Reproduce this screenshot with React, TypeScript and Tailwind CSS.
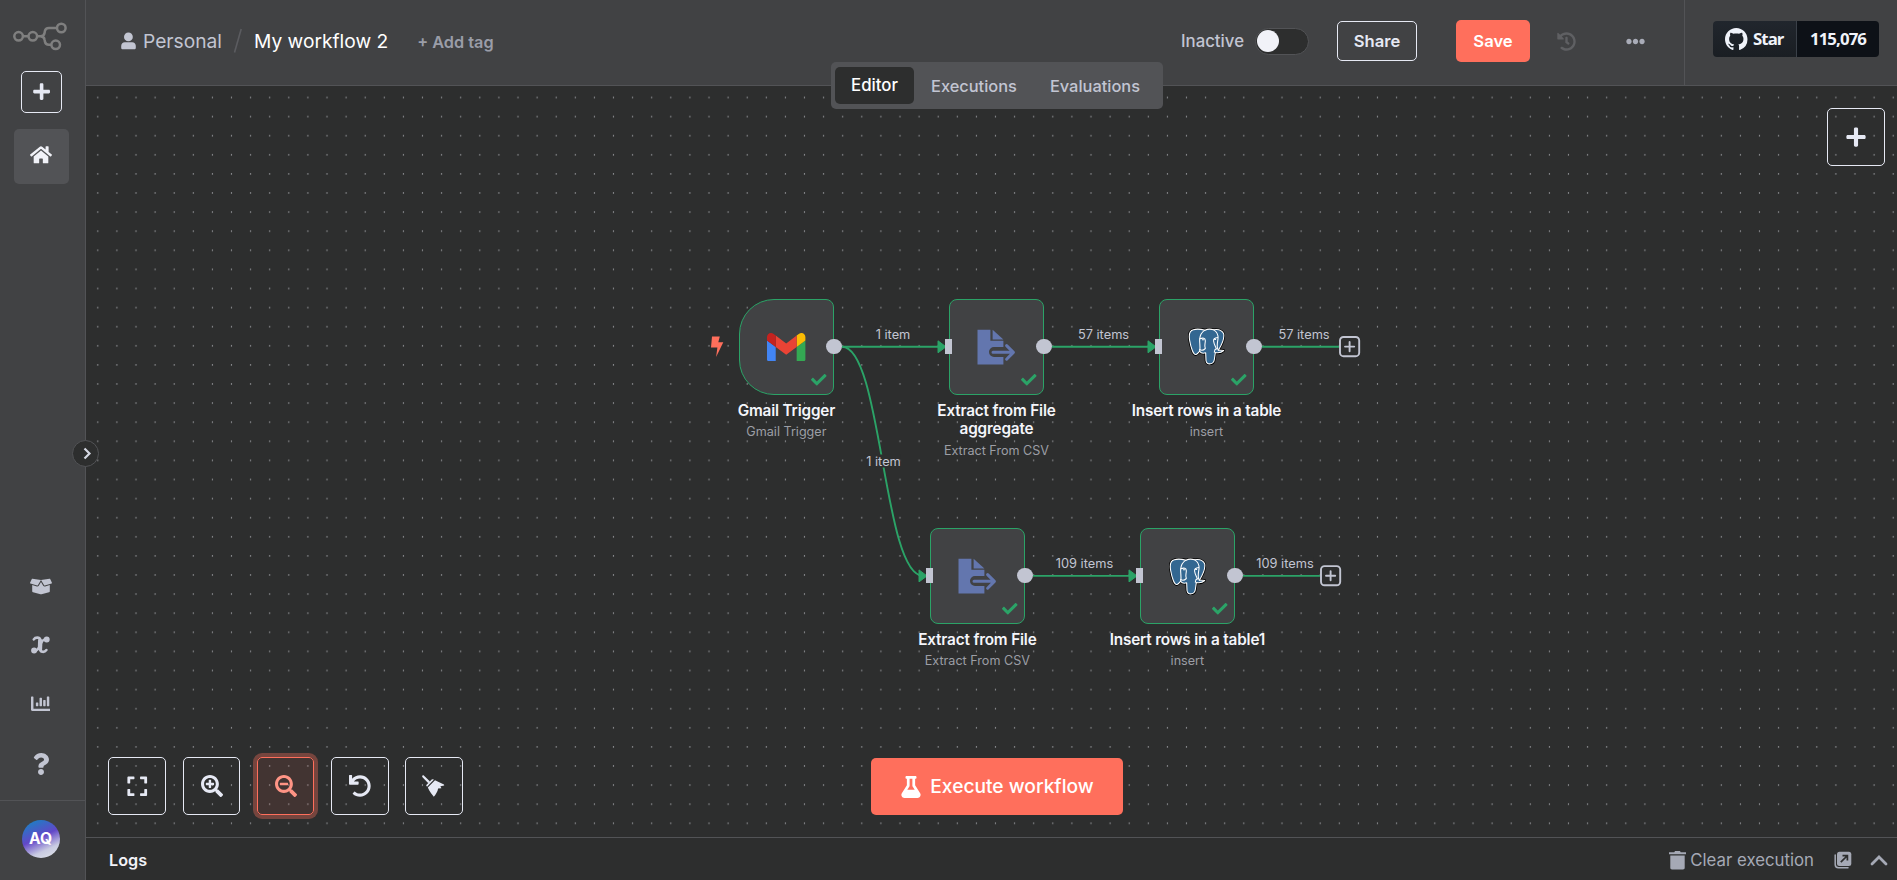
import React from "react";
import {
  FaBoxOpen,
  FaChartBar,
  FaCheck,
  FaEllipsisH,
  FaExpand,
  FaFlask,
  FaHistory,
  FaHome,
  FaPlus,
  FaQuestion,
  FaSearchMinus,
  FaSearchPlus,
  FaUndo,
} from "react-icons/fa";

const GRID = 19.1;
const NODE = 95.6;

type Kind = "gmail" | "extract" | "postgres";

interface FlowNode {
  id: string;
  kind: Kind;
  x: number;
  y: number;
  title: string;
  subtitle: string;
}

const nodes: FlowNode[] = [
  { id: "gmail", kind: "gmail", x: 652.6, y: 213.2, title: "Gmail Trigger", subtitle: "Gmail Trigger" },
  { id: "extract-agg", kind: "extract", x: 862.7, y: 213.2, title: "Extract from File aggregate", subtitle: "Extract From CSV" },
  { id: "insert", kind: "postgres", x: 1072.7, y: 213.2, title: "Insert rows in a table", subtitle: "insert" },
  { id: "extract", kind: "extract", x: 843.6, y: 442.3, title: "Extract from File", subtitle: "Extract From CSV" },
  { id: "insert1", kind: "postgres", x: 1053.6, y: 442.3, title: "Insert rows in a table1", subtitle: "insert" },
];

const labels = [
  { text: "1 item", x: 807, y: 248 },
  { text: "1 item", x: 797.5, y: 375 },
  { text: "57 items", x: 1017.5, y: 248 },
  { text: "57 items", x: 1218, y: 248 },
  { text: "109 items", x: 998.5, y: 477 },
  { text: "109 items", x: 1199, y: 477 },
];

function Logo() {
  return (
    <svg width="56" height="32" viewBox="0 0 56 32" fill="none" stroke="#7f7f7f" strokeWidth="2.5">
      <circle cx="6.6" cy="16.3" r="4.3" />
      <circle cx="20.8" cy="16.3" r="4.3" />
      <circle cx="49.3" cy="8" r="4.3" />
      <circle cx="43.7" cy="24.8" r="4.3" />
      <path d="M11 16.3h5.5M25 16.3h3.4c2.6 0 3.9-1.6 4.2-3.6l.3-1.6c.4-2 1.8-3.1 4-3.1H45M28.4 16.3c2.6 0 3.9 1.6 4.2 3.6l.3 1.6c.4 2 1.8 3.3 4 3.3h2.4" />
    </svg>
  );
}

function GithubMark() {
  return (
    <svg width="22.5" height="22.5" viewBox="0 0 16 16" fill="currentColor">
      <path d="M8 0C3.58 0 0 3.58 0 8c0 3.54 2.29 6.53 5.47 7.59.4.07.55-.17.55-.38 0-.19-.01-.82-.01-1.49-2.01.37-2.53-.49-2.69-.94-.09-.23-.48-.94-.82-1.13-.28-.15-.68-.52-.01-.53.63-.01 1.08.58 1.23.82.72 1.21 1.87.87 2.33.66.07-.52.28-.87.51-1.07-1.78-.2-3.64-.89-3.64-3.95 0-.87.31-1.59.82-2.15-.08-.2-.36-1.02.08-2.12 0 0 .67-.21 2.2.82.64-.18 1.32-.27 2-.27.68 0 1.36.09 2 .27 1.53-1.04 2.2-.82 2.2-.82.44 1.1.16 1.92.08 2.12.51.56.82 1.27.82 2.15 0 3.07-1.87 3.75-3.65 3.95.29.25.54.73.54 1.48 0 1.07-.01 1.93-.01 2.2 0 .21.15.46.55.38A8.013 8.013 0 0 0 16 8c0-4.42-3.58-8-8-8z" />
    </svg>
  );
}

function UserIcon() {
  return (
    <svg width="15" height="18" viewBox="0 0 15 18" fill="#c2c5d2">
      <circle cx="7.4" cy="4.9" r="4.4" />
      <path d="M3.8 10.3h7.4c2 0 3.6 1.7 3.6 3.8v1.6c0 1-.7 1.6-1.6 1.6H1.8c-.9 0-1.6-.6-1.6-1.6v-1.6c0-2.1 1.6-3.8 3.6-3.8z" />
    </svg>
  );
}

function GmailIcon() {
  return (
    <svg width="38.4" height="28.8" viewBox="52 42 88 66">
      <path fill="#4285f4" d="M58 108h14V74L52 59v43c0 3.32 2.69 6 6 6" />
      <path fill="#34a853" d="M120 108h14c3.32 0 6-2.69 6-6V59l-20 15" />
      <path fill="#fbbc04" d="M120 48v26l20-15v-8c0-7.42-8.47-11.65-14.4-7.2" />
      <path fill="#ea4335" d="M72 74V48l24 18 24-18v26L96 92" />
      <path fill="#c5221f" d="M52 51v8l20 15V48l-5.6-4.2c-5.94-4.45-14.4-.22-14.4 7.2" />
    </svg>
  );
}

function ExtractIcon() {
  return (
    <svg width="39" height="36" viewBox="0 0 39 36" fill="#6376ae">
      <path d="M.5.8h12.9v10.9h13V18H17a5 5 0 0 0-5 5 5 5 0 0 0 5 5h9.4v7.6H.5z" />
      <path d="M15.6.8 26.4 10.4H15.6z" />
      <path
        d="M16 23.3h20M29.6 16.6l6.8 6.8-6.800 6.8"
        fill="none"
        stroke="#6376ae"
        strokeWidth="3"
        strokeLinejoin="round"
        strokeLinecap="round"
      />
    </svg>
  );
}

function PostgresIcon() {
  const silhouette =
    "M341 149C329 152 327 164 330 181C334 203 341 225 349 223C354 221 357 216 360 213C364 220 371 220 378 218L379 241C380 249 385 252 392 251C400 250 403 245 404 238L407 217C416 219 426 217 432 211C428 209 421 211 416 210C426 194 434 172 432 161C426 149 412 147 402 149C393 146 382 147 376 150C364 147 351 145 341 149Z";
  return (
    <svg width="37" height="37" viewBox="325 143.5 111 111" strokeLinejoin="round" strokeLinecap="round">
      <path d={silhouette} fill="#000" stroke="#000" strokeWidth="8" />
      <path d={silhouette} fill="#336791" stroke="#fff" strokeWidth="3.2" />
      <g fill="none" stroke="#fff" strokeWidth="3.2">
        <path d="M376 150C366 156 361 165 360 177C359 190 363 197 360 213" />
        <path d="M402 149C412 155 416 165 415 175C414 188 409 198 416 210" />
        <path d="M361 176C370 172 377 174 377 182C377 191 373 196 377 205C370 212 365 211 360 208" />
        <path d="M414 172C405 173 400 177 402 184C403 192 408 200 410 206" />
        <path d="M404 216C404 210 407 207 410 206" />
        <path d="M368 179h4M405 178h3" />
      </g>
    </svg>
  );
}

function BroomIcon() {
  return (
    <svg width="23" height="23" viewBox="0 0 23 23" fill="#e6e9f4">
      <path d="M1.8.5 8 6.4 6.3 8.3.3 2.1C-.2 1 .9 0 1.8.5z" />
      <path d="M4.1 10.3 10 4.2l2 .3-7 7.3z" />
      <path d="M5.8 12.6 13 5.2c2.6 1.5 5.6 2.7 9 4.2l.2 1.2-3.8.6 1 2-3.3.4c-.3 2.8-2.3 6-4.3 8.2-1.5-2-4.2-5-6-9.2z" />
    </svg>
  );
}

function VariableIcon() {
  return (
    <svg width="19" height="18" viewBox="0 0 19 18" fill="none" stroke="#c2c5d2" strokeLinecap="round">
      <path d="M2.8 3.400C4.200 1.200 8.400.700 9.400 3.800l-.600 8.700c.5 4 4.500 4.300 6.600 1.500" strokeWidth="2.600" />
      <path d="M9.300 3.400 8.900 14" strokeWidth="4.400" strokeLinecap="butt" />
      <path d="M15.500 3.200C12.600 2.500 10.800 5.200 9.200 9S5.500 15.300 3.400 14.800" strokeWidth="2.400" />
      <circle cx="15.700" cy="3.600" r="1.500" strokeWidth="3" />
      <circle cx="3.100" cy="14.400" r="1.500" strokeWidth="3" />
    </svg>
  );
}

function NodeView({ node }: { node: FlowNode }) {
  return (
    <div className="absolute" style={{ left: node.x, top: node.y, width: NODE }}>
      <div
        className={
          "relative flex h-[95.6px] w-full items-center justify-center border-[1.6px] border-[#2ba367] bg-[#414244] " +
          (node.kind === "gmail" ? "rounded-l-[35px] rounded-r-[8px]" : "rounded-[8px]")
        }
      >
        {node.kind === "gmail" && <GmailIcon />}
        {node.kind === "extract" && <ExtractIcon />}
        {node.kind === "postgres" && <PostgresIcon />}
        <FaCheck className="absolute right-[6.5px] bottom-[6.5px] size-[15.5px] text-[#2ba367]" />
        {node.kind !== "gmail" && <div className="absolute top-[38.5px] -left-[5px] h-[15.6px] w-[7.8px] bg-[#c2c5d2]" />}
        <div className="absolute top-[38.5px] -right-[8.5px] size-[15.6px] rounded-full bg-[#c2c5d2]" />
      </div>
      <div className="-mx-[40px] mt-[7px] flex flex-col items-center text-center">
        <div
          className={
            "text-[15.3px] leading-[18.5px] font-semibold tracking-[-0.17px] text-[#f4f5fa] " +
            (node.id === "extract-agg" ? "w-[130px]" : "whitespace-nowrap")
          }
        >
          {node.title}
        </div>
        <div className="mt-[4px] text-[12.6px] leading-[16px] text-[#9c9ea5]">{node.subtitle}</div>
      </div>
    </div>
  );
}

function Connections() {
  const mid = 260.8;
  const low = 489.9;
  return (
    <svg className="absolute inset-0 size-full">
      <defs>
        <pattern id="dots" x="1.8" y="2" width={GRID} height={GRID} patternUnits="userSpaceOnUse">
          <circle cx="10" cy="9.5" r="0.62" fill="#c3c5cb" />
        </pattern>
      </defs>
      <rect width="100%" height="100%" fill="url(#dots)" />
      <g fill="none" stroke="#2ba367" strokeWidth="1.9">
        <path d={`M756 ${mid}H854`} />
        <path d={`M756 ${mid}C796 ${mid} 797 ${low} 837 ${low}`} />
        <path d={`M966 ${mid}H1064`} />
        <path d={`M1176 ${mid}H1253`} />
        <path d={`M947 ${low}H1045`} />
        <path d={`M1157 ${low}H1234`} />
      </g>
      <g fill="#2ba367" stroke="#2ba367" strokeLinejoin="round">
        <path d={`M852 ${mid - 6}l8 6-8 6z`} />
        <path d={`M1062 ${mid - 6}l8 6-8 6z`} />
        <path d={`M833 ${low - 6}l8 6-8 6z`} />
        <path d={`M1043 ${low - 6}l8 6-8 6z`} />
      </g>
      <g fill="#2d2e2e" stroke="#c2c5d2" strokeWidth="1.9" strokeLinecap="round">
        <rect x="1254" y={mid - 9.8} width="19.2" height="19.2" rx="3.5" />
        <path d={`M1259 ${mid - 0.2}h9.200M1263.600 ${mid - 4.8}v9.200`} />
        <rect x="1235" y={low - 9.8} width="19.2" height="19.2" rx="3.5" />
        <path d={`M1240 ${low - 0.2}h9.200M1244.600 ${low - 4.8}v9.200`} />
      </g>
      <path d="M626 250.500h7.800l-1.500 5.800h5l-7.200 14.700 1.300-9.500h-6.400z" fill="#ff6f5c" />
    </svg>
  );
}

function CanvasButton({ children, active = false }: { children: React.ReactNode; active?: boolean }) {
  return (
    <button
      className={
        "flex size-[57.6px] items-center justify-center rounded-[5px] border " +
        (active
          ? "border-[#ff6f5c] bg-[#ff6f5c]/10 text-[#ff9485] shadow-[0_0_0_4px_rgba(255,111,92,0.35)]"
          : "border-[#e6e9f4] text-[#e6e9f4]")
      }
    >
      {children}
    </button>
  );
}

function Sidebar() {
  return (
    <aside className="relative flex w-[86px] shrink-0 flex-col items-center border-r border-[#525356] bg-[#414244] pr-[2px]">
      <div className="mt-[20px] h-[32px] pr-[3px]">
        <Logo />
      </div>
      <button className="mt-[19px] flex h-[42px] w-[41px] items-center justify-center rounded-[5px] border border-[#e6e9f4] text-[#e6e9f4]">
        <FaPlus className="size-[19.2px]" />
      </button>
      <button className="mt-[16px] flex size-[55px] items-center justify-center rounded-[5px] bg-[#525356] text-[#f1f2f8]">
        <FaHome className="-mt-[3px] mr-[1px] h-[19.5px] w-[22px]" />
      </button>
      <nav className="mt-auto flex h-[223px] flex-col items-center pr-[2px] text-[#c2c5d2]">
        <FaBoxOpen className="h-[19px] w-[22px]" />
        <span className="mt-[40px] h-[18px]">
          <VariableIcon />
        </span>
        <FaChartBar className="mt-[40px] size-[19.5px]" />
        <FaQuestion className="mt-[39px] size-[22px]" />
      </nav>
      <div className="flex h-[80px] w-[86px] justify-center border-t border-[#525356] pt-[19px] pr-[2px]">
        <div className="flex size-[38px] items-center justify-center rounded-full bg-[linear-gradient(155deg,#1b80c4_8%,#6247c8_46%,#c9cbe2_74%,#dfe3ea_95%)] text-[15.6px] font-bold text-white">
          AQ
        </div>
      </div>
      <button className="absolute top-[439.5px] -right-[14px] z-20 flex size-[27px] items-center justify-center rounded-full border border-[#525356] bg-[#2d2e2e]">
        <svg width="9" height="13" viewBox="0 0 9 13" fill="none" stroke="#d5d8e3" strokeWidth="2.2" className="ml-[3px]">
          <path d="M1.5 1.5l5 5-5 5" />
        </svg>
      </button>
    </aside>
  );
}

function Header() {
  return (
    <header className="relative flex h-[86px] shrink-0 border-b border-[#525356] bg-[#414244]">
      <div className="flex h-[82px] flex-1 items-center pl-[35px]">
        <UserIcon />
        <span className="ml-[7px] text-[19.2px] text-[#c2c5d2]">Personal</span>
        <svg width="10" height="26" viewBox="0 0 10 26" className="ml-[11px]">
          <path d="M1.5 24.5 8.2 1" stroke="#5b5c60" strokeWidth="1.6" />
        </svg>
        <span className="ml-[11px] text-[19.2px] text-white">My workflow 2</span>
        <span className="ml-[29px] pt-[3px] text-[16.3px] font-semibold text-[#9a9da8]">+ Add tag</span>
      </div>
      <div className="flex h-[82px] items-center">
        <span className="pt-[1px] text-[16.8px] font-medium text-[#c2c5d2]">Inactive</span>
        <div className="ml-[11px] flex h-[27px] w-[54px] items-center rounded-full border border-[#525356] bg-[#2d2e2e] px-[1px]">
          <div className="size-[22px] rounded-full bg-[#f1f2f8]" />
        </div>
        <button className="ml-[28px] h-[40px] w-[80px] rounded-[5px] border border-[#e6e9f4] text-[16.6px] font-semibold text-[#e6e9f4]">
          Share
        </button>
        <button className="ml-[39px] h-[42px] w-[74px] rounded-[5px] bg-[#ff6f5c] text-[16.6px] font-semibold text-white">Save</button>
        <FaHistory className="ml-[27px] size-[19px] text-[#5f6063]" />
        <FaEllipsisH className="ml-[50px] size-[19px] text-[#a9acb8]" />
      </div>
      <div className="ml-[39px] flex h-full w-[213px] items-start border-l border-[#525356] pt-[21px] pl-[28px] font-['Open_Sans',sans-serif] text-[16.8px] font-bold text-[#f0f3fa]">
        <div className="flex h-[36px] w-[84px] items-center justify-center rounded-l-[4px] border-r border-[#3a4048] bg-linear-to-b from-[#21262d] to-[#1a1e23]">
          <GithubMark />
          <span className="ml-[5px] tracking-[-0.9px]">Star</span>
        </div>
        <div className="flex h-[36px] w-[82px] items-center justify-center rounded-r-[4px] bg-[#0d1117]">
          <span className="tracking-[-0.9px]">115,076</span>
        </div>
      </div>
      <div className="absolute top-[62px] left-[744.5px] z-10 flex h-[47px] w-[332.5px] items-center rounded-[5px] bg-[#525356] pl-[4.500px] text-[16.4px] font-medium text-[#c2c5d2]">
        <span className="flex h-[37px] w-[79px] items-center justify-center rounded-[5px] bg-[#2d2e2e] pt-[1px] text-[16.8px] text-white">Editor</span>
        <span className="pt-[1px] pl-[17px]">Executions</span>
        <span className="pt-[1px] pl-[33px]">Evaluations</span>
      </div>
    </header>
  );
}

function Canvas() {
  return (
    <main className="relative flex flex-1 flex-col justify-between bg-[#2d2e2e]">
      <Connections />
      {labels.map((l, i) => (
        <span
          key={i}
          className="absolute -translate-x-1/2 -translate-y-1/2 bg-[#2d2e2e] text-[12.8px] leading-[13px] whitespace-nowrap text-[#c2c5d2]"
          style={{ left: l.x, top: l.y }}
        >
          {l.text}
        </span>
      ))}
      {nodes.map((n) => (
        <NodeView key={n.id} node={n} />
      ))}
      <div className="relative flex justify-end pt-[22px] pr-[12px]">
        <CanvasButton>
          <FaPlus className="size-[22px]" />
        </CanvasButton>
      </div>
      <div className="relative flex items-end pb-[22px] pl-[22.4px]">
        <div className="flex gap-[16.6px]">
          <CanvasButton>
            <FaExpand className="size-[22.5px]" />
          </CanvasButton>
          <CanvasButton>
            <FaSearchPlus className="ml-[1px] size-[22px]" />
          </CanvasButton>
          <CanvasButton active>
            <FaSearchMinus className="size-[22px]" />
          </CanvasButton>
          <CanvasButton>
            <FaUndo className="size-[22px]" />
          </CanvasButton>
          <CanvasButton>
            <BroomIcon />
          </CanvasButton>
        </div>
        <button className="ml-[408.5px] flex h-[57px] w-[251.5px] items-center justify-center rounded-[5px] bg-[#ff6f5c] text-[19.2px] font-medium text-white">
          <FaFlask className="size-[22px]" />
          <span className="ml-[8px]">Execute workflow</span>
        </button>
      </div>
    </main>
  );
}

function LogsBar() {
  return (
    <footer className="flex h-[43px] shrink-0 items-center border-t border-[#525356] bg-[#2d2e2e] pt-[2px] pr-[9px] pl-[23px]">
      <span className="text-[16.200px] font-semibold text-[#f1f2f8]">Logs</span>
      <div className="ml-auto flex items-center text-[#a5a9b5]">
        <svg width="17" height="20" viewBox="0 0 17 20" fill="currentColor">
          <path d="M0 2.3h5.3L6 1h5l.7 1.3H17v1.9H0zM1.3 5.5h14.4v12.3c0 .9-.7 1.7-1.7 1.7H3c-1 0-1.7-.8-1.7-1.7z" />
        </svg>
        <span className="ml-[4px] pt-[2px] text-[16.8px]">Clear execution</span>
        <svg width="18" height="18" viewBox="0 0 18 18" fill="none" className="ml-[20px]">
          <path d="M1.2 4v9.5c0 2 1.2 3.2 3.2 3.2H14" stroke="currentColor" strokeWidth="1.5" strokeLinecap="round" />
          <rect x="3" y=".7" width="14.3" height="14.3" rx="2.5" fill="currentColor" />
          <path d="M6.8 11.2 13 5M8.5 4.6h4.9v4.9" stroke="#2d2e2e" strokeWidth="1.7" />
        </svg>
        <svg width="18" height="12" viewBox="0 0 18 12" fill="none" className="ml-[18px]">
          <path d="M2 10l7-7 7 7" stroke="currentColor" strokeWidth="2.8" strokeLinecap="round" />
        </svg>
      </div>
    </footer>
  );
}

export default function App() {
  return (
    <div className="flex h-[880px] w-[1897px] overflow-hidden bg-[#2d2e2e] font-['Inter',sans-serif] leading-normal">
      <Sidebar />
      <div className="flex min-w-0 flex-1 flex-col">
        <Header />
        <Canvas />
        <LogsBar />
      </div>
    </div>
  );
}
